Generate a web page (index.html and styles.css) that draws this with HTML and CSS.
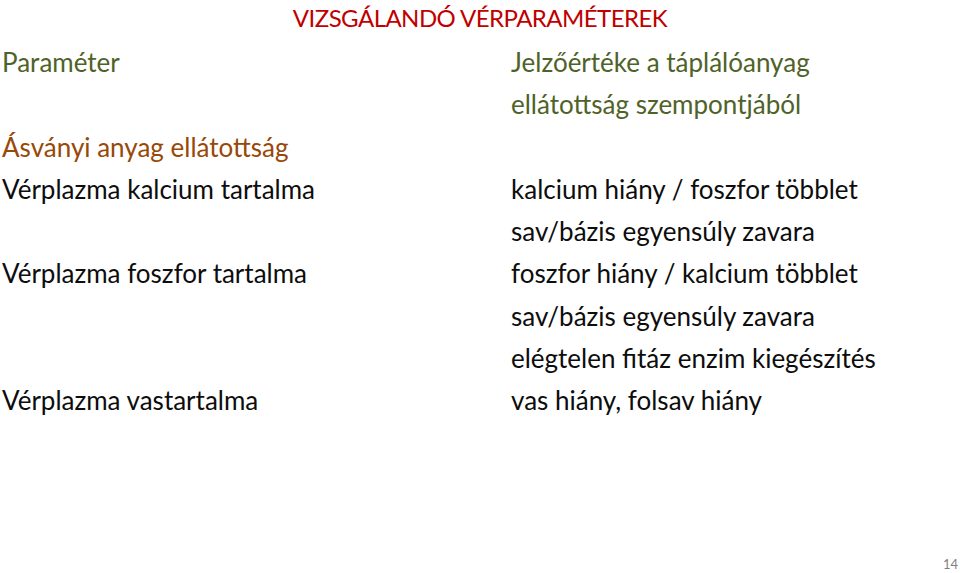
FILE: index.html
```html
<!DOCTYPE html>
<html lang="hu">
<head>
<meta charset="utf-8">
<title>Vizsgálandó vérparaméterek</title>
<link rel="stylesheet" href="styles.css">
</head>
<body>
<div class="slide">
  <h1 class="title">VIZSGÁLANDÓ VÉRPARAMÉTEREK</h1>
  <div class="table">
    <div class="cell green">Paraméter</div>
    <div class="cell green">Jelzőértéke a táplálóanyag</div>
    <div class="cell"></div>
    <div class="cell green">ellátottság szempontjából</div>
    <div class="cell brown">Ásványi anyag ellátottság</div>
    <div class="cell"></div>
    <div class="cell">Vérplazma kalcium tartalma</div>
    <div class="cell">kalcium hiány / foszfor többlet</div>
    <div class="cell"></div>
    <div class="cell">sav/bázis egyensúly zavara</div>
    <div class="cell">Vérplazma foszfor tartalma</div>
    <div class="cell">foszfor hiány / kalcium többlet</div>
    <div class="cell"></div>
    <div class="cell">sav/bázis egyensúly zavara</div>
    <div class="cell"></div>
    <div class="cell">elégtelen fitáz enzim kiegészítés</div>
    <div class="cell">Vérplazma vastartalma</div>
    <div class="cell">vas hiány, folsav hiány</div>
  </div>
  <div class="footer">14</div>
</div>
</body>
</html>
```
FILE: styles.css
```css
html, body {
  margin: 0;
  padding: 0;
  background: #ffffff;
}
.slide {
  width: 960px;
  height: 573px;
  display: flex;
  flex-direction: column;
  font-family: Lato, "Open Sans", sans-serif;
  overflow: hidden;
}
.title {
  margin: 0;
  font-weight: normal;
  font-size: 24px;
  line-height: 36px;
  height: 36px;
  text-align: center;
  color: #c00000;
  letter-spacing: -0.55px;
}
.table {
  margin-top: 5px;
  padding-left: 2px;
  display: grid;
  grid-template-columns: 509px 1fr;
  grid-auto-rows: 42.3px;
  font-size: 26px;
  line-height: 42.3px;
  color: #0d0d0d;
}
.cell {
  white-space: nowrap;
}
.green {
  color: #4f6228;
}
.brown {
  color: #984807;
}
.footer {
  margin-top: auto;
  padding: 0 2px 1px 0;
  text-align: right;
  font-size: 13px;
  line-height: 15px;
  color: #7f7f7f;
}
```
